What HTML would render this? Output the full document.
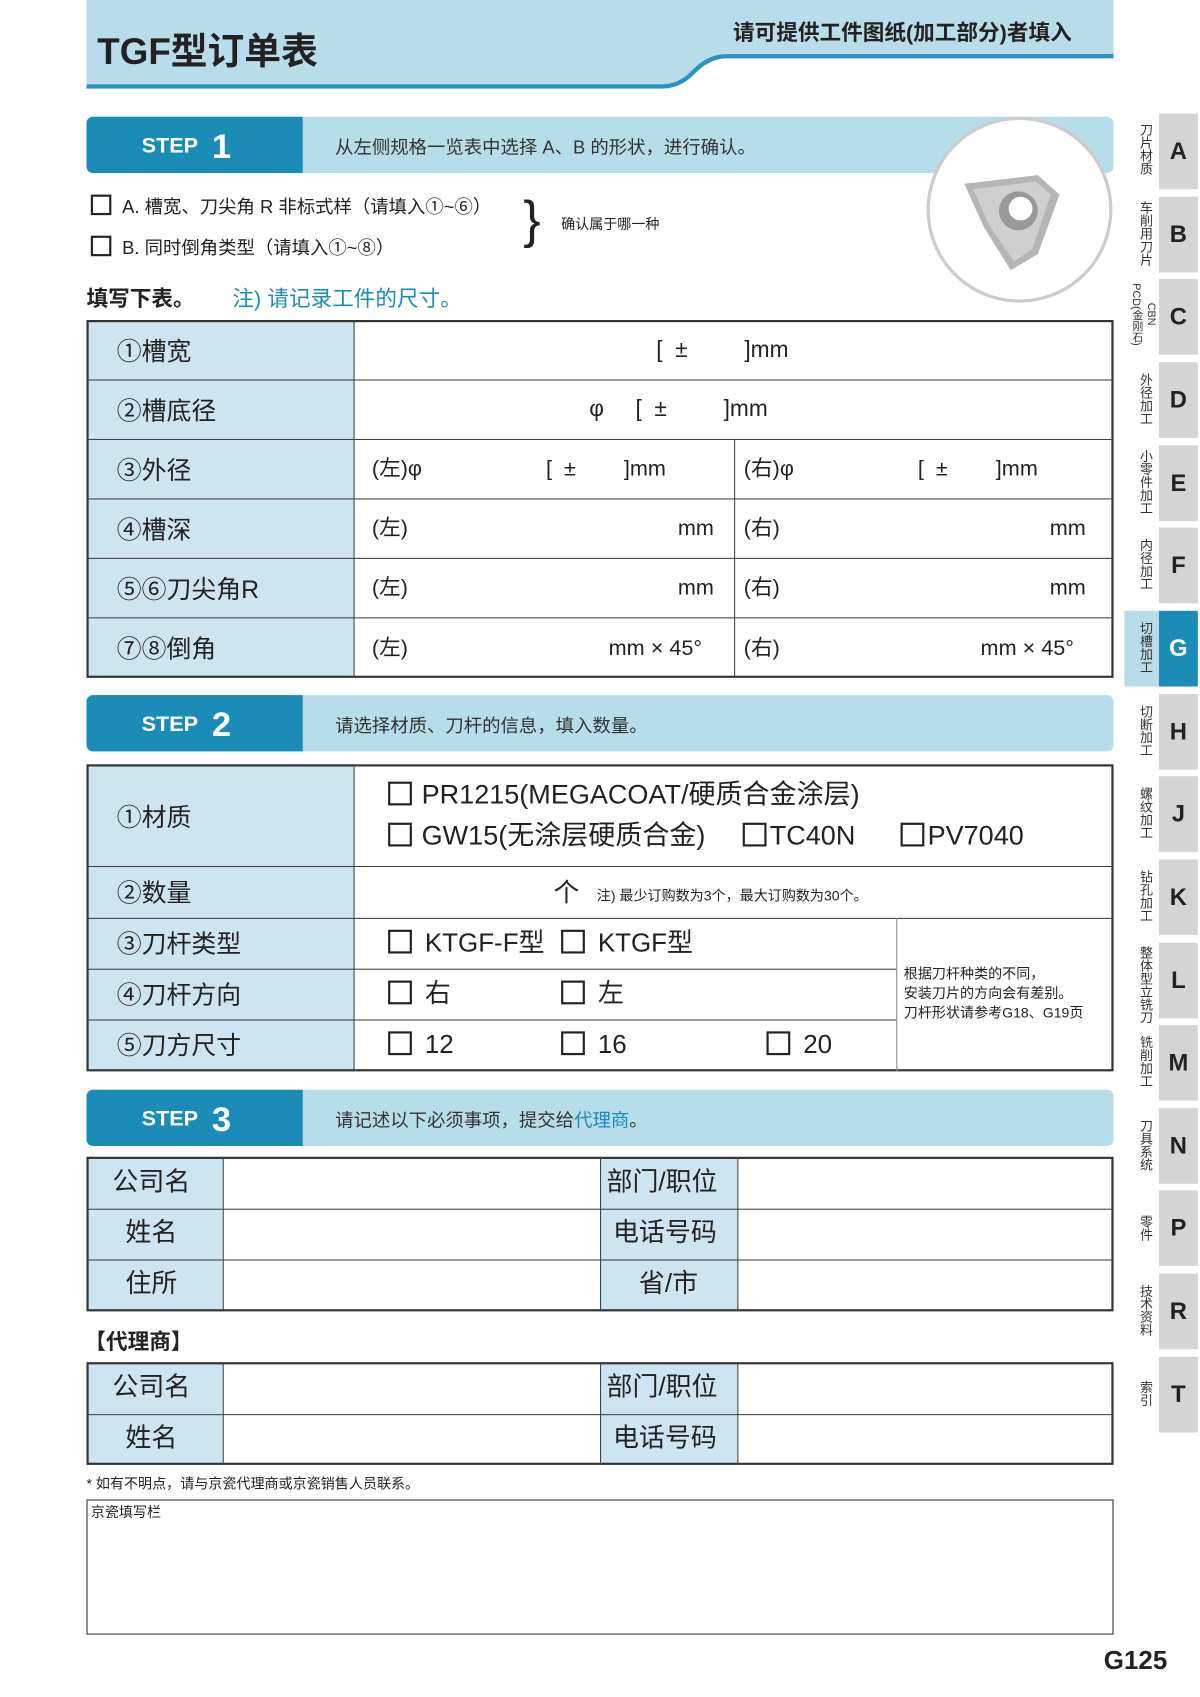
<!DOCTYPE html>
<html><head><meta charset="utf-8"><style>
*{margin:0;padding:0;box-sizing:border-box}
body{width:1200px;height:1697px;overflow:hidden;background:#fff;font-family:"Liberation Sans","Noto Sans CJK SC",sans-serif;color:#222}
#w{position:absolute;left:0;top:0;width:1110px;height:1570px;transform:scale(1.0811);transform-origin:0 0}
.a{position:absolute;white-space:nowrap;line-height:1.6}
.lb{position:absolute;background:#cde5f0}
.ln{position:absolute;background:#444}
.step{position:absolute;left:80px;width:950px;height:52px;background:#b7dcea;border-radius:6px}
.step .d{position:absolute;left:0;top:0;width:200px;height:52px;background:#1b8bb8;border-radius:6px 0 0 6px;color:#fff;font-weight:bold}
.step .d b{position:absolute;left:51px;top:15px;font-size:20px;line-height:24px}
.step .d i{position:absolute;left:116px;top:9px;font-size:32px;font-style:normal;line-height:36px}
.step .t{position:absolute;left:230px;top:17px;font-size:17px;color:#333;line-height:24px}
.cb{display:inline-block;width:19px;height:19px;border:2px solid #222;vertical-align:-2px;margin-right:10px}
.f22{font-size:23px}
.tab{position:absolute;left:1072px;width:36px;height:70px;background:#d4d4d4;font-weight:bold;font-size:22px;text-align:center;line-height:70px;color:#222}
.sl{position:absolute;left:1048px;width:18px;font-size:12px;line-height:13px;writing-mode:vertical-rl;color:#333}
</style></head><body><div id="w">
<svg class="a" style="left:0;top:0" width="1110" height="90">
<path d="M80 0H1030V50H670Q655 52 640 68Q628 80 610 80H80Z" fill="#b8dcea"/>
<path d="M80 80H612Q628 80 640 68Q655 52 672 52H1030" fill="none" stroke="#2a93c2" stroke-width="4"/>
</svg>
<div class="a" style="left:90px;top:26px;font-size:34px;font-weight:bold;color:#222;line-height:44px">TGF型订单表</div>
<div class="a" style="left:678px;top:17px;font-size:20px;font-weight:bold;color:#222;line-height:28px">请可提供工件图纸(加工部分)者填入</div>

<div class="step" style="top:108px"><div class="d"><b>STEP</b><i>1</i></div><div class="t">从左侧规格一览表中选择 A、B 的形状，进行确认。</div></div>
<div class="a" style="left:857px;top:108px;width:172px;height:172px;border-radius:50%;border:3px solid #ccc;background:#fff"></div>
<svg class="a" style="left:880px;top:150px" width="120" height="110"><path d="M12 20L80 12L100 30L80 85L55 100L30 60Z" fill="#b5b5b5"/><path d="M20 25L78 18L92 30L75 80L58 92L35 58Z" fill="#cfcfcf"/><circle cx="62" cy="45" r="18" fill="#999"/><circle cx="64" cy="43" r="11" fill="#fff"/></svg>
<div class="a" style="left:84px;top:178px;font-size:17px"><span class="cb"></span>A. 槽宽、刀尖角 R 非标式样（请填入①~⑥）</div>
<div class="a" style="left:84px;top:216px;font-size:17px"><span class="cb"></span>B. 同时倒角类型（请填入①~⑧）</div>
<div class="a" style="left:484px;top:176px;font-size:48px;font-weight:300;line-height:56px">}</div>
<div class="a" style="left:519px;top:198px;font-size:13px">确认属于哪一种</div>
<div class="a" style="left:80px;top:261px;font-size:20px;font-weight:bold">填写下表。</div>
<div class="a" style="left:215px;top:261px;font-size:20px;color:#1b8bb8">注) 请记录工件的尺寸。</div>

<div class="lb" style="left:80px;top:296px;width:248px;height:331px"></div>
<div class="a" style="left:80px;top:296px;width:950px;height:331px;border:2px solid #333"></div>
<div class="ln" style="left:327px;top:296px;width:1px;height:331px"></div>
<div class="ln" style="left:679px;top:406px;width:1px;height:221px"></div>
<div class="ln" style="left:80px;top:351px;width:950px;height:1px"></div>
<div class="ln" style="left:80px;top:406px;width:950px;height:1px"></div>
<div class="ln" style="left:80px;top:461px;width:950px;height:1px"></div>
<div class="ln" style="left:80px;top:516px;width:950px;height:1px"></div>
<div class="ln" style="left:80px;top:571px;width:950px;height:1px"></div>
<div class="a f22" style="left:108px;top:307px">①槽宽</div>
<div class="a f22" style="left:108px;top:362px">②槽底径</div>
<div class="a f22" style="left:108px;top:417px">③外径</div>
<div class="a f22" style="left:108px;top:472px">④槽深</div>
<div class="a f22" style="left:108px;top:527px">⑤⑥刀尖角R</div>
<div class="a f22" style="left:108px;top:582px">⑦⑧倒角</div>
<div class="a" style="left:607px;top:307px;font-size:21px">[&nbsp;&nbsp;±&nbsp;&nbsp;&nbsp;&nbsp;&nbsp;&nbsp;&nbsp;&nbsp;&nbsp;]mm</div>
<div class="a" style="left:545px;top:362px;font-size:21px">φ&nbsp;&nbsp;&nbsp;&nbsp;&nbsp;[&nbsp;&nbsp;±&nbsp;&nbsp;&nbsp;&nbsp;&nbsp;&nbsp;&nbsp;&nbsp;&nbsp;]mm</div>
<div class="a" style="left:344px;top:418px;font-size:20px">(左)φ</div><div class="a" style="left:505px;top:418px;font-size:20px">[&nbsp;&nbsp;±&nbsp;&nbsp;&nbsp;&nbsp;&nbsp;&nbsp;&nbsp;&nbsp;]mm</div>
<div class="a" style="left:688px;top:418px;font-size:20px">(右)φ</div><div class="a" style="left:849px;top:418px;font-size:20px">[&nbsp;&nbsp;±&nbsp;&nbsp;&nbsp;&nbsp;&nbsp;&nbsp;&nbsp;&nbsp;]mm</div>
<div class="a" style="left:344px;top:473px;font-size:20px">(左)</div><div class="a" style="left:627px;top:473px;font-size:20px">mm</div>
<div class="a" style="left:688px;top:473px;font-size:20px">(右)</div><div class="a" style="left:971px;top:473px;font-size:20px">mm</div>
<div class="a" style="left:344px;top:528px;font-size:20px">(左)</div><div class="a" style="left:627px;top:528px;font-size:20px">mm</div>
<div class="a" style="left:688px;top:528px;font-size:20px">(右)</div><div class="a" style="left:971px;top:528px;font-size:20px">mm</div>
<div class="a" style="left:344px;top:584px;font-size:20px">(左)</div><div class="a" style="left:563px;top:584px;font-size:20px">mm × 45°</div>
<div class="a" style="left:688px;top:584px;font-size:20px">(右)</div><div class="a" style="left:907px;top:584px;font-size:20px">mm × 45°</div>

<div class="step" style="top:643px"><div class="d"><b>STEP</b><i>2</i></div><div class="t">请选择材质、刀杆的信息，填入数量。</div></div>
<div class="lb" style="left:80px;top:707px;width:248px;height:284px"></div>
<div class="a" style="left:80px;top:707px;width:950px;height:284px;border:2px solid #333"></div>
<div class="ln" style="left:327px;top:707px;width:1px;height:284px"></div>
<div class="ln" style="left:80px;top:801px;width:950px;height:1px"></div>
<div class="ln" style="left:80px;top:849px;width:950px;height:1px"></div>
<div class="ln" style="left:80px;top:896px;width:749px;height:1px"></div>
<div class="ln" style="left:80px;top:943px;width:749px;height:1px"></div>
<div class="ln" style="left:829px;top:849px;width:1px;height:142px;background:#888"></div>
<div class="a f22" style="left:108px;top:738px">①材质</div>
<div class="a f22" style="left:108px;top:808px">②数量</div>
<div class="a f22" style="left:108px;top:855px">③刀杆类型</div>
<div class="a f22" style="left:108px;top:902px">④刀杆方向</div>
<div class="a f22" style="left:108px;top:949px">⑤刀方尺寸</div>
<div class="a" style="left:359px;top:715px;font-size:25px"><span class="cb" style="width:22px;height:22px;margin-right:9px"></span>PR1215(MEGACOAT/硬质合金涂层)</div>
<div class="a" style="left:359px;top:753px;font-size:25px"><span class="cb" style="width:22px;height:22px;margin-right:9px"></span>GW15(无涂层硬质合金)</div>
<div class="a" style="left:687px;top:753px;font-size:25px"><span class="cb" style="width:22px;height:22px;margin-right:3px"></span>TC40N</div>
<div class="a" style="left:833px;top:753px;font-size:25px"><span class="cb" style="width:22px;height:22px;margin-right:3px"></span>PV7040</div>
<div class="a" style="left:512px;top:808px;font-size:24px">个</div>
<div class="a" style="left:552px;top:819px;font-size:13px">注) 最少订购数为3个，最大订购数为30个。</div>
<div class="a" style="left:359px;top:854px;font-size:24px"><span class="cb" style="width:22px;height:22px;margin-right:12px"></span>KTGF-F型</div>
<div class="a" style="left:519px;top:854px;font-size:24px"><span class="cb" style="width:22px;height:22px;margin-right:12px"></span>KTGF型</div>
<div class="a" style="left:359px;top:901px;font-size:24px"><span class="cb" style="width:22px;height:22px;margin-right:12px"></span>右</div>
<div class="a" style="left:519px;top:901px;font-size:24px"><span class="cb" style="width:22px;height:22px;margin-right:12px"></span>左</div>
<div class="a" style="left:359px;top:948px;font-size:24px"><span class="cb" style="width:22px;height:22px;margin-right:12px"></span>12</div>
<div class="a" style="left:519px;top:948px;font-size:24px"><span class="cb" style="width:22px;height:22px;margin-right:12px"></span>16</div>
<div class="a" style="left:709px;top:948px;font-size:24px"><span class="cb" style="width:22px;height:22px;margin-right:12px"></span>20</div>
<div class="a" style="left:836px;top:892px;font-size:13px;line-height:18px">根据刀杆种类的不同，<br>安装刀片的方向会有差别。<br>刀杆形状请参考G18、G19页</div>

<div class="step" style="top:1008px"><div class="d"><b>STEP</b><i>3</i></div><div class="t">请记述以下必须事项，提交给<span style="color:#1b8bb8">代理商</span>。</div></div>
<div class="lb" style="left:80px;top:1070px;width:126px;height:143px"></div>
<div class="lb" style="left:555px;top:1070px;width:127px;height:143px"></div>
<div class="a" style="left:80px;top:1070px;width:950px;height:143px;border:2px solid #333"></div>
<div class="ln" style="left:206px;top:1070px;width:1px;height:143px"></div>
<div class="ln" style="left:555px;top:1070px;width:1px;height:143px"></div>
<div class="ln" style="left:682px;top:1070px;width:1px;height:143px"></div>
<div class="ln" style="left:80px;top:1118px;width:950px;height:1px"></div>
<div class="ln" style="left:80px;top:1165px;width:950px;height:1px"></div>
<div class="a" style="left:104px;top:1075px;font-size:24px">公司名</div>
<div class="a" style="left:116px;top:1122px;font-size:24px">姓名</div>
<div class="a" style="left:116px;top:1169px;font-size:24px">住所</div>
<div class="a" style="left:561px;top:1075px;font-size:24px">部门/职位</div>
<div class="a" style="left:567px;top:1122px;font-size:24px">电话号码</div>
<div class="a" style="left:591px;top:1169px;font-size:24px">省/市</div>
<div class="a" style="left:78px;top:1226px;font-size:20px;font-weight:bold">【代理商】</div>
<div class="lb" style="left:80px;top:1260px;width:126px;height:95px"></div>
<div class="lb" style="left:555px;top:1260px;width:127px;height:95px"></div>
<div class="a" style="left:80px;top:1260px;width:950px;height:95px;border:2px solid #333"></div>
<div class="ln" style="left:206px;top:1260px;width:1px;height:95px"></div>
<div class="ln" style="left:555px;top:1260px;width:1px;height:95px"></div>
<div class="ln" style="left:682px;top:1260px;width:1px;height:95px"></div>
<div class="ln" style="left:80px;top:1308px;width:950px;height:1px"></div>
<div class="a" style="left:104px;top:1265px;font-size:24px">公司名</div>
<div class="a" style="left:116px;top:1312px;font-size:24px">姓名</div>
<div class="a" style="left:561px;top:1265px;font-size:24px">部门/职位</div>
<div class="a" style="left:567px;top:1312px;font-size:24px">电话号码</div>
<div class="a" style="left:80px;top:1363px;font-size:13px">* 如有不明点，请与京瓷代理商或京瓷销售人员联系。</div>
<div class="a" style="left:80px;top:1387px;width:950px;height:125px;border:1.5px solid #333"></div>
<div class="a" style="left:84px;top:1389px;font-size:13px">京瓷填写栏</div>
<div class="a" style="left:1021px;top:1518px;font-size:24px;font-weight:bold">G125</div>

<div class="a" style="left:1040px;top:565px;width:32px;height:70px;background:#b8dcea"></div>
<div class="tab" style="top:105px">A</div><div class="sl" style="top:114px">刀片材质</div>
<div class="tab" style="top:182px">B</div><div class="sl" style="top:186px">车削用刀片</div>
<div class="tab" style="top:258px">C</div>
<div class="sl" style="top:262px;left:1042px;width:14px;font-size:10px;line-height:11px">PCD(金刚石)</div>
<div class="sl" style="top:280px;left:1056px;width:14px;font-size:10px;line-height:11px">CBN</div>
<div class="tab" style="top:335px">D</div><div class="sl" style="top:345px">外径加工</div>
<div class="tab" style="top:412px">E</div><div class="sl" style="top:416px">小零件加工</div>
<div class="tab" style="top:488px">F</div><div class="sl" style="top:498px">内径加工</div>
<div class="tab" style="top:565px;background:#1b8bb8;color:#fff">G</div><div class="sl" style="top:575px">切槽加工</div>
<div class="tab" style="top:642px">H</div><div class="sl" style="top:652px">切断加工</div>
<div class="tab" style="top:718px">J</div><div class="sl" style="top:728px">螺纹加工</div>
<div class="tab" style="top:795px">K</div><div class="sl" style="top:805px">钻孔加工</div>
<div class="tab" style="top:872px">L</div><div class="sl" style="top:875px">整体型立铣刀</div>
<div class="tab" style="top:948px">M</div><div class="sl" style="top:958px">铣削加工</div>
<div class="tab" style="top:1025px">N</div><div class="sl" style="top:1035px">刀具系统</div>
<div class="tab" style="top:1101px">P</div><div class="sl" style="top:1124px">零件</div>
<div class="tab" style="top:1178px">R</div><div class="sl" style="top:1188px">技术资料</div>
<div class="tab" style="top:1255px">T</div><div class="sl" style="top:1277px">索引</div>
</div></body></html>
